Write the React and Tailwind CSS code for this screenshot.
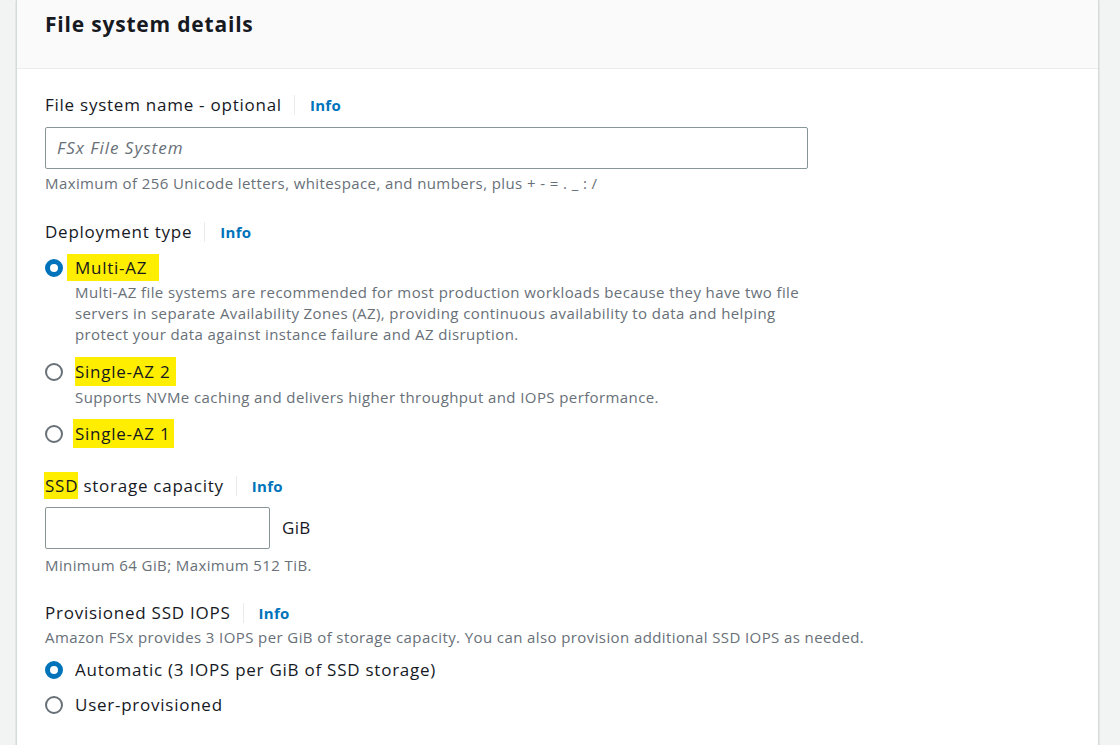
import React from "react";

const FONT = { fontFamily: '"Open Sans", "Noto Sans", Arial, sans-serif' };

const LBL = "text-[17px] leading-[24px] tracking-[0.75px] text-[#16191f]";
const HINT = "text-[15px] leading-[21px] tracking-[0.4px] text-[#687078]";

function Info() {
  return (
    <>
      <span className="ml-[12px] h-[20px] w-px bg-[#e9ebed]" />
      <span className="ml-[15px] text-[15px] font-bold tracking-[0.3px] text-[#0073bb]">Info</span>
    </>
  );
}

function Label({ children, mt }) {
  return (
    <div className={`flex items-center ${mt || ""}`}>
      <span className={LBL}>{children}</span>
      <Info />
    </div>
  );
}

function Radio({ checked }) {
  return checked ? (
    <span className="h-[18px] w-[18px] shrink-0 rounded-full border-[5px] border-[#0073bb] bg-white" />
  ) : (
    <span className="h-[18px] w-[18px] shrink-0 rounded-full border-2 border-[#687078] bg-white" />
  );
}

function Hl({ children, cls }) {
  return <span className={`bg-[#ffee00] ${cls || ""}`}>{children}</span>;
}

export default function App() {
  return (
    <div className="flex h-[745px] w-[1120px] overflow-hidden bg-[#f2f3f3]" style={FONT}>
      <div className="ml-[16px] mr-[21px] flex-1 border-x border-[#d5dbdb] bg-white shadow-[0_1px_1px_rgba(0,28,36,0.3)]">
        <div className="h-[69px] border-b border-[#eaeded] bg-[#fafafa] px-[28px] pt-[8px]">
          <h2 className="text-[21px] font-bold leading-[32px] tracking-[0.8px] text-[#16191f]">File system details</h2>
        </div>
        <div className="px-[28px] pt-[24px]">
          <Label>File system name - optional</Label>
          <div className="mt-[10px] flex h-[42px] w-[763px] items-center rounded-[2px] border border-[#879596] px-[11px]">
            <span className="text-[17px] italic tracking-[1px] text-[#687078]">FSx File System</span>
          </div>
          <div className={`mt-[4px] ${HINT}`}>
            Maximum of 256 Unicode letters, whitespace, and numbers, plus + - = . _ : /
          </div>

          <Label mt="mt-[26px]">Deployment type</Label>
          <div className="mt-[12px] flex items-center gap-[12px]">
            <Radio checked />
            <span className={LBL}>
              <Hl cls="-ml-[8px] pl-[8px] pr-[12px] py-[2px]">Multi-AZ</Hl>
            </span>
          </div>
          <div className={`ml-[30px] mt-[2px] ${HINT}`}>
            Multi-AZ file systems are recommended for most production workloads because they have two file
            <br />
            servers in separate Availability Zones (AZ), providing continuous availability to data and helping
            <br />
            protect your data against instance failure and AZ disruption.
          </div>
          <div className="mt-[15px] flex items-center gap-[12px]">
            <Radio />
            <span className={LBL}>
              <Hl cls="pr-[6px] py-[3px]">Single-AZ 2</Hl>
            </span>
          </div>
          <div className={`ml-[30px] mt-[3px] ${HINT}`}>
            Supports NVMe caching and delivers higher throughput and IOPS performance.
          </div>
          <div className="mt-[14px] flex items-center gap-[12px]">
            <Radio />
            <span className={LBL}>
              <Hl cls="-ml-[2px] pl-[2px] pr-[4px] py-[3px]">Single-AZ 1</Hl>
            </span>
          </div>

          <div className="mt-[28px] flex items-center">
            <span className={LBL}>
              <Hl cls="-ml-[1px] pl-[1px] py-[2px]">SSD</Hl> storage capacity
            </span>
            <Info />
          </div>
          <div className="mt-[9px] flex items-center">
            <div className="h-[42px] w-[225px] rounded-[2px] border border-[#879596]" />
            <span className="ml-[12px] text-[17px] tracking-[0.3px] text-[#16191f]">GiB</span>
          </div>
          <div className={`mt-[6px] ${HINT}`}>Minimum 64 GiB; Maximum 512 TiB.</div>

          <Label mt="mt-[25px]">Provisioned SSD IOPS</Label>
          <div className={`mt-[2px] ${HINT}`}>
            Amazon FSx provides 3 IOPS per GiB of storage capacity. You can also provision additional SSD IOPS as needed.
          </div>
          <div className="mt-[10px] flex items-center gap-[12px]">
            <Radio checked />
            <span className={LBL}>Automatic (3 IOPS per GiB of SSD storage)</span>
          </div>
          <div className="mt-[11px] flex items-center gap-[12px]">
            <Radio />
            <span className={LBL}>User-provisioned</span>
          </div>
        </div>
      </div>
    </div>
  );
}
